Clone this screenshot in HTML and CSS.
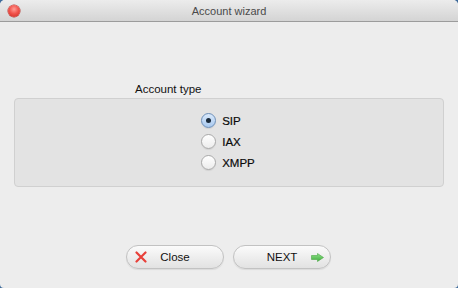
FILE: index.html
```html
<!DOCTYPE html>
<html>
<head>
<meta charset="utf-8">
<link rel="stylesheet" href="styles.css">
</head>
<body>
<div class="window">
  <div class="titlebar">
    <span class="close-dot"></span>
    <span class="title">Account wizard</span>
  </div>
  <div class="content">
    <div class="label">Account type</div>
    <div class="group">
      <div class="radios">
        <label class="radio-row"><span class="radio checked"></span><span>SIP</span></label>
        <label class="radio-row"><span class="radio"></span><span>IAX</span></label>
        <label class="radio-row"><span class="radio"></span><span>XMPP</span></label>
      </div>
    </div>
    <div class="buttons">
      <button class="btn">
        <svg class="icon-x" width="12" height="12" viewBox="0 0 12 12"><path d="M1.5 1.5 L10.5 10.5 M10.5 1.5 L1.5 10.5" stroke="#e8403a" stroke-width="2.2" stroke-linecap="round"/></svg>
        <span class="btn-text">Close</span>
      </button>
      <button class="btn">
        <span class="btn-text">NEXT</span>
        <svg class="icon-arrow" width="13" height="9" viewBox="0 0 13 9"><defs><linearGradient id="g" x1="0" y1="0" x2="0" y2="1"><stop offset="0" stop-color="#8fe08a"/><stop offset="1" stop-color="#3fae3c"/></linearGradient></defs><path d="M0.5 2.5 H6.5 V0.5 L12.5 4.5 L6.5 8.5 V6.5 H0.5 Z" fill="url(#g)" stroke="#4aa845" stroke-width="0.6"/></svg>
      </button>
    </div>
  </div>
</div>
</body>
</html>
```
FILE: styles.css
```css
html, body {
  margin: 0;
  padding: 0;
  width: 458px;
  height: 288px;
  background: #3d6a9a;
  overflow: hidden;
}
.window {
  width: 458px;
  height: 288px;
  background: #ededed;
  border-radius: 5px 5px 4px 4px;
  overflow: hidden;
  font-family: "Liberation Sans", Arial, sans-serif;
  color: #1a1a1a;
  display: flex;
  flex-direction: column;
}
.titlebar {
  height: 21px;
  border-bottom: 1px solid #9c9c9c;
  background: linear-gradient(#ececec, #d4d4d4);
  display: flex;
  align-items: center;
  justify-content: center;
  position: relative;
}
.close-dot {
  position: absolute;
  left: 8px;
  top: 5px;
  width: 12px;
  height: 12px;
  border-radius: 50%;
  background: radial-gradient(circle at 50% 35%, #ff9d95 0%, #f2544c 45%, #c8271f 100%);
  box-shadow: 0 0 0 0.5px #b3352f;
}
.title {
  font-size: 11px;
  color: #4a4a4a;
}
.content {
  flex: 1;
  display: flex;
  flex-direction: column;
  padding: 60px 14px 0 14px;
}
.label {
  font-size: 11.5px;
  padding-left: 121px;
  height: 16px;
  line-height: 14px;
  color: #111;
}
.group {
  background: #e3e3e3;
  border: 1px solid #d0d0d0;
  border-radius: 4px;
  display: flex;
  justify-content: center;
  padding-top: 11px;
  box-sizing: border-box;
  height: 89px;
}
.radios {
  display: flex;
  flex-direction: column;
  padding-right: 2px;
}
.radio-row {
  height: 21px;
  display: flex;
  align-items: center;
  gap: 6px;
  font-size: 11.5px;
  color: #0a0a0a;
  -webkit-text-stroke: 0.2px #0a0a0a;
}
.radio {
  width: 13px;
  height: 13px;
  border-radius: 50%;
  border: 1px solid #a9a9a9;
  background: linear-gradient(#ffffff, #ececec);
  box-shadow: 0 1px 1px rgba(0,0,0,0.08);
  display: flex;
  align-items: center;
  justify-content: center;
}
.radio.checked {
  border-color: #6d8fb8;
  background: linear-gradient(#d9e9fb, #a9c9ef);
}
.radio.checked::after {
  content: "";
  width: 5px;
  height: 5px;
  border-radius: 50%;
  background: #1a2a3a;
}
.buttons {
  margin-top: 58px;
  display: flex;
  justify-content: center;
  gap: 9px;
  padding-right: 2px;
}
.btn {
  width: 98px;
  height: 24px;
  border-radius: 12px;
  border: 1px solid #c2c2c2;
  background: linear-gradient(#fbfbfb, #eeeeee 50%, #e2e2e2);
  box-shadow: 0 1px 1px rgba(0,0,0,0.08);
  display: flex;
  align-items: center;
  padding: 0 7px;
  font-family: "Liberation Sans", Arial, sans-serif;
  font-size: 11.5px;
  color: #111;
  box-sizing: border-box;
}
.btn-text {
  flex: 1;
  text-align: center;
}
.icon-x {
  margin-left: 1px;
  margin-right: -12px;
}
.icon-arrow {
  margin-left: -13px;
  margin-right: -1px;
}
```
